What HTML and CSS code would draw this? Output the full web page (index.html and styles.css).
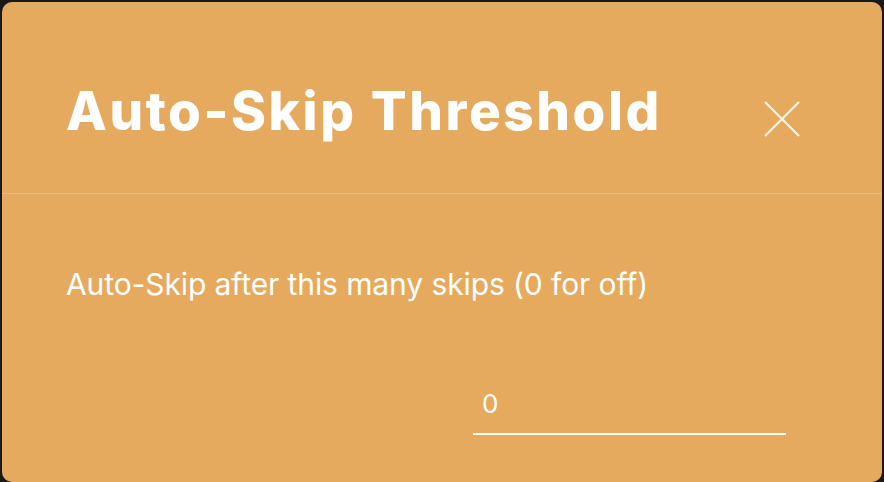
FILE: index.html
```html
<!DOCTYPE html>
<html>
<head>
<meta charset="utf-8">
<link rel="stylesheet" href="styles.css">
</head>
<body>
<div class="modal">
  <div class="modal-header">
    <h1 class="modal-title">Auto-Skip Threshold</h1>
    <button class="close-btn" aria-label="Close">
      <svg width="36" height="36" viewBox="0 0 36 36"><path d="M1 1 L35 35 M35 1 L1 35" stroke="#fdf3e3" stroke-width="2.2" fill="none"/></svg>
    </button>
  </div>
  <div class="modal-body">
    <p class="label">Auto-Skip after this many skips (0 for off)</p>
    <div class="input-row">
      <input class="num-input" type="text" value="0">
    </div>
  </div>
</div>
</body>
</html>
```
FILE: styles.css
```css
html, body {
  margin: 0;
  padding: 0;
  background: #1a1818;
  height: 100%;
  overflow: hidden;
}
.modal {
  margin: 2px 2px 0 2px;
  width: 880px;
  height: 480px;
  background: #e6aa5e;
  border-radius: 10px;
  box-sizing: border-box;
  font-family: Inter, "Open Sans", sans-serif;
  color: #fff;
}
.modal-header {
  height: 192px;
  box-sizing: border-box;
  display: flex;
  align-items: flex-start;
  justify-content: space-between;
  padding: 83px 82px 0 64px;
  border-bottom: 1px solid rgba(255,255,255,0.18);
}
.modal-title {
  margin: 0;
  font-size: 53px;
  line-height: 53px;
  font-weight: 800;
  letter-spacing: 2.6px;
  color: #fff;
}
.close-btn {
  background: none;
  border: 0;
  padding: 0;
  margin-top: 16px;
  width: 36px;
  height: 36px;
  cursor: pointer;
}
.close-btn svg { display: block; }
.modal-body {
  padding: 70px 64px 0 64px;
}
.label {
  margin: 0;
  font-size: 30px;
  line-height: 40px;
  letter-spacing: -0.1px;
  color: #fff;
}
.input-row {
  display: flex;
  justify-content: flex-end;
  padding-right: 32px;
  margin-top: 84px;
}
.num-input {
  width: 313px;
  height: 47px;
  box-sizing: border-box;
  background: transparent;
  border: 0;
  border-bottom: 2px solid #fff;
  color: #fff;
  font-family: inherit;
  font-size: 26px;
  line-height: 30px;
  padding: 0 9px 15px 9px;
  outline: none;
}
```
